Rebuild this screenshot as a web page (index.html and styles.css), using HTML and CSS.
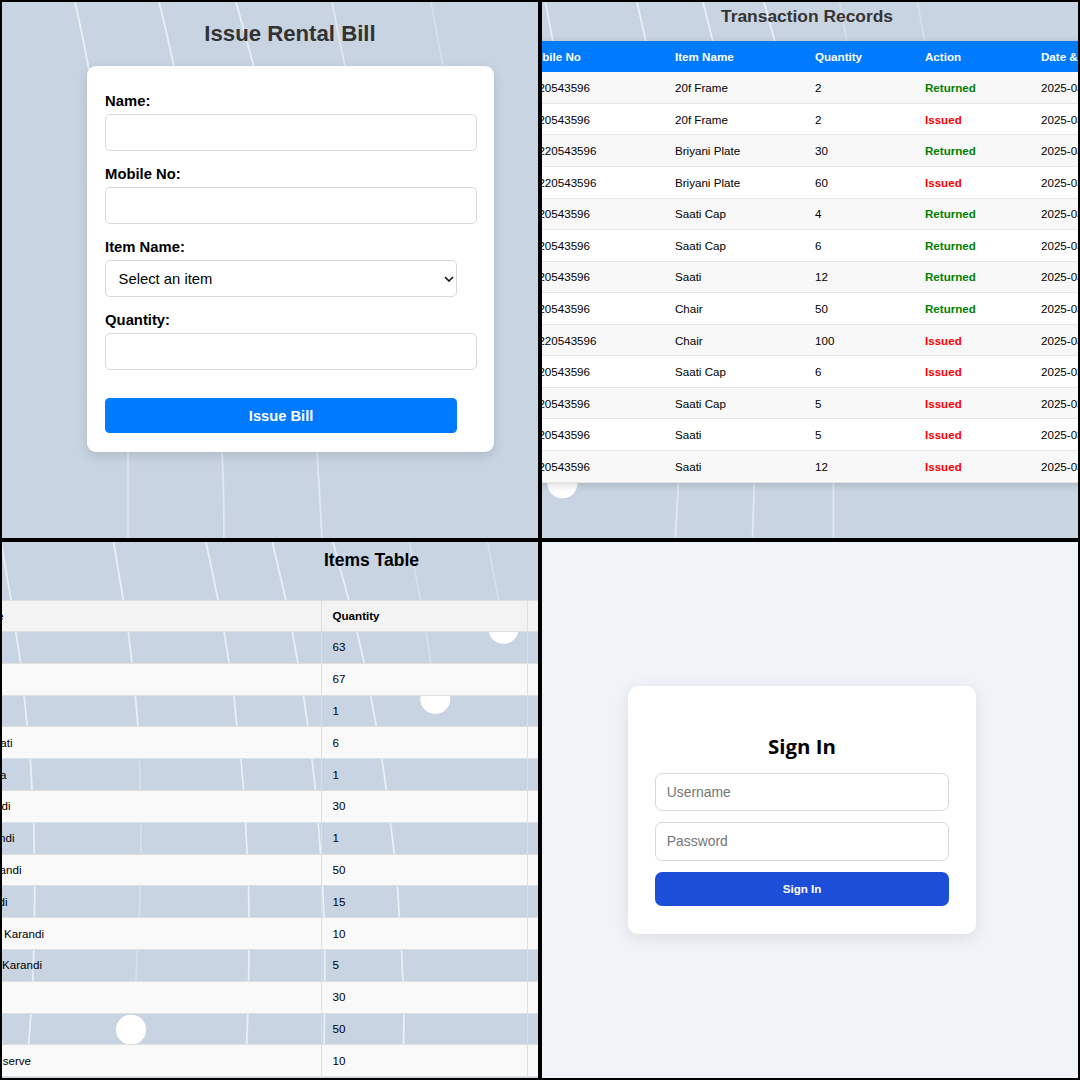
FILE: index.html
```
<!DOCTYPE html>
<html lang="en">
<head>
<meta charset="utf-8">
<title>Rental Manager</title>
<link rel="stylesheet" href="styles.css">
</head>
<body>
<main class="board">
  <section class="panel issue">
    <svg class="backdrop" viewBox="2 2 536 536" aria-hidden="true">
      <path d="M75 2Q82 33 89 70M159 2Q167 33 174 67M236 2L254 67"/>
      <path class="soft" d="M332 2L345 67M128 450V538M222 450Q224 490 224 538M317 450L322 538"/>
      <path class="faint" d="M431 2L443 67"/>
    </svg>
    <h1 class="title">Issue Rental Bill</h1>
    <form class="bill-card">
      <label class="label" for="name">Name:</label>
      <input class="field" id="name" type="text">
      <label class="label" for="mobile">Mobile No:</label>
      <input class="field" id="mobile" type="text">
      <label class="label" for="item">Item Name:</label>
      <div class="select" id="item"><span>Select an item</span>
        <svg class="chevron" viewBox="0 0 10 6"><path d="M1 1L5 5L9 1"/></svg>
      </div>
      <label class="label" for="quantity">Quantity:</label>
      <input class="field" id="quantity" type="text">
      <button class="bill-button" type="button">Issue Bill</button>
    </form>
  </section>

  <section class="panel records">
    <svg class="backdrop" viewBox="542 2 536 536" aria-hidden="true">
      <path d="M545.5 2L553 42M637 2L646 42M703 2L713 42M764 2L775 42"/>
      <path class="soft" d="M678.5 482L675.3 538M754.3 482L752.5 538M833.4 482V538"/>
      <path class="faint" d="M839.5 2L847 42M917.5 2L924.8 42"/>
      <circle cx="562.4" cy="483.3" r="15"/>
    </svg>
    <h2 class="title">Transaction Records</h2>
    <table class="record-table">
      <colgroup><col class="c-mobile"><col class="c-item"><col class="c-qty"><col class="c-action"><col class="c-date"></colgroup>
      <thead><tr><th>Mobile No</th><th>Item Name</th><th>Quantity</th><th>Action</th><th>Date &amp; Time</th></tr></thead>
      <tbody>
        <tr><td>9220543596</td><td>20f Frame</td><td>2</td><td class="returned">Returned</td><td>2025-03-01</td></tr>
        <tr><td>9220543596</td><td>20f Frame</td><td>2</td><td class="issued">Issued</td><td>2025-03-01</td></tr>
        <tr><td>99220543596</td><td>Briyani Plate</td><td>30</td><td class="returned">Returned</td><td>2025-03-01</td></tr>
        <tr><td>99220543596</td><td>Briyani Plate</td><td>60</td><td class="issued">Issued</td><td>2025-03-01</td></tr>
        <tr><td>9220543596</td><td>Saati Cap</td><td>4</td><td class="returned">Returned</td><td>2025-03-01</td></tr>
        <tr><td>9220543596</td><td>Saati Cap</td><td>6</td><td class="returned">Returned</td><td>2025-03-01</td></tr>
        <tr><td>9220543596</td><td>Saati</td><td>12</td><td class="returned">Returned</td><td>2025-03-01</td></tr>
        <tr><td>9220543596</td><td>Chair</td><td>50</td><td class="returned">Returned</td><td>2025-03-01</td></tr>
        <tr><td>99220543596</td><td>Chair</td><td>100</td><td class="issued">Issued</td><td>2025-03-01</td></tr>
        <tr><td>9220543596</td><td>Saati Cap</td><td>6</td><td class="issued">Issued</td><td>2025-03-01</td></tr>
        <tr><td>9220543596</td><td>Saati Cap</td><td>5</td><td class="issued">Issued</td><td>2025-03-01</td></tr>
        <tr><td>9220543596</td><td>Saati</td><td>5</td><td class="issued">Issued</td><td>2025-03-01</td></tr>
        <tr><td>9220543596</td><td>Saati</td><td>12</td><td class="issued">Issued</td><td>2025-03-01</td></tr>
      </tbody>
    </table>
  </section>

  <section class="panel items">
    <svg class="backdrop" viewBox="2 542 536 536" aria-hidden="true">
      <path d="M1 542L11 600L15.8 632L20.7 663L24.1 695L27.2 727L30.3 759L32 790L33.7 823L34.4 854L34.8 886L34.4 918L33.7 950L32.7 981L31 1013L28.6 1045"/>
      <path d="M113.6 542L123.3 600L128.4 632L131.9 663L135.3 695L138 727"/>
      <path class="faint" d="M138 727L139.5 759L140.2 790L141.2 823L140.8 854L140.1 886L139.5 918L137.4 950L136 981"/>
      <path d="M206 542L218 600L224.2 632L229 663L233.8 695L236.9 727L241 759L243.5 790L245.5 823L247.2 854L248.6 886L249 918V950L248.6 981L247.9 1013L246.6 1045"/>
      <path d="M272.4 542L285.8 600L292.4 632L297.9 663L303.4 695L307.9 727L312 759L315.4 790L318.2 823L320.6 854L322.7 886L324 918L324.7 950V1013L324 1045"/>
      <path d="M333 542L348.8 600L357 632L364.3 663L370.5 695L376.4 727L381.9 759L386.4 790L390.5 823L394.3 854L397.4 886L399.4 918L401.5 950L402.9 981L403.9 1013L403.6 1045"/>
      <path class="faint" d="M409.4 542L420.5 600L426.3 632L430.8 663M487.6 542L498.6 600"/>
      <circle cx="503.5" cy="629" r="15"/><circle cx="435.3" cy="699" r="15"/><circle cx="131" cy="1029.7" r="15"/>
    </svg>
    <h2 class="title">Items Table</h2>
    <table class="item-table">
      <colgroup><col class="c-name"><col class="c-count"><col class="c-edge"></colgroup>
      <thead><tr><th><span class="tail t0">Item Name</span></th><th>Quantity</th><th></th></tr></thead>
      <tbody>
        <tr><td></td><td>63</td><td></td></tr>
        <tr><td></td><td>67</td><td></td></tr>
        <tr><td></td><td>1</td><td></td></tr>
        <tr><td><span class="tail t1">Saati</span></td><td>6</td><td></td></tr>
        <tr><td><span class="tail t2">Kadaya</span></td><td>1</td><td></td></tr>
        <tr><td><span class="tail t3">Karandi</span></td><td>30</td><td></td></tr>
        <tr><td><span class="tail t4">Karandi</span></td><td>1</td><td></td></tr>
        <tr><td><span class="tail t5">Karandi</span></td><td>50</td><td></td></tr>
        <tr><td><span class="tail t6">Karandi</span></td><td>15</td><td></td></tr>
        <tr><td><span class="tail t7">Karandi</span></td><td>10</td><td></td></tr>
        <tr><td><span class="tail t8">Karandi</span></td><td>5</td><td></td></tr>
        <tr><td></td><td>30</td><td></td></tr>
        <tr><td></td><td>50</td><td></td></tr>
        <tr><td><span class="tail t9">serve</span></td><td>10</td><td></td></tr>
        <tr><td></td><td></td><td></td></tr>
      </tbody>
    </table>
  </section>

  <section class="panel login">
    <form class="login-card">
      <h2 class="login-title">Sign In</h2>
      <input class="login-field" type="text" placeholder="Username">
      <input class="login-field" type="password" placeholder="Password">
      <button class="login-button" type="button">Sign In</button>
    </form>
  </section>
</main>
</body>
</html>
```
FILE: styles.css
```
* { box-sizing: border-box; }
body {
  margin: 0;
  background: #000;
  color: #000;
  font-family: "Liberation Sans", Arial, sans-serif;
}
.board {
  display: grid;
  grid-template: 536px 536px / 536px 536px;
  gap: 4px;
  width: 1080px;
  height: 1080px;
  padding: 2px;
}
.panel {
  position: relative;
  overflow: hidden;
  background: #c8d4e2;
}
.backdrop {
  position: absolute;
  inset: 0;
  width: 536px;
  height: 536px;
  fill: none;
  stroke: #fff;
  stroke-opacity: .62;
  stroke-width: 1.8;
}
.backdrop .soft { stroke-opacity: .45; }
.backdrop .faint { stroke-opacity: .27; }
.backdrop circle { fill: #fff; stroke: none; }
.title {
  position: relative;
  margin: 0;
  text-align: center;
  white-space: nowrap;
}

/* Issue bill form */
.issue .title {
  width: 407px;
  margin-left: 84.5px;
  padding-top: 18px;
  height: 63.5px;
  font-size: 22.2px;
  line-height: 27px;
  color: #333;
}
.bill-card {
  position: relative;
  display: flex;
  flex-direction: column;
  width: 407px;
  height: 386px;
  margin-left: 84.7px;
  padding: 25.5px 18px 18px 18.4px;
  border-radius: 9px;
  background: #fff;
  box-shadow: 0 4px 12px rgba(0, 0, 0, .12);
}
.label {
  height: 23.4px;
  font-size: 14.8px;
  font-weight: 700;
  line-height: 21px;
}
.field,
.select {
  width: 371.5px;
  height: 37px;
  margin: 0 0 12.6px;
  border: 1px solid #d9d9d9;
  border-radius: 5px;
  background: #fff;
}
.select {
  display: flex;
  align-items: center;
  justify-content: space-between;
  width: 352px;
  padding: 0 2.5px 0 12.5px;
  font-size: 14.8px;
}
.chevron {
  width: 10px;
  height: 6px;
  fill: none;
  stroke: #111;
  stroke-width: 1.6;
}
.bill-button {
  width: 352px;
  height: 35.5px;
  margin-top: 15px;
  padding: 0;
  border: 0;
  border-radius: 4.5px;
  background: #007bff;
  color: #fff;
  font: 700 14.7px "Liberation Sans", Arial, sans-serif;
}

/* Tables */
table {
  position: relative;
  border-collapse: separate;
  border-spacing: 0;
  table-layout: fixed;
  font-size: 11.6px;
}
th, td {
  padding: 0;
  text-align: left;
  white-space: nowrap;
  line-height: 14px;
}
.records .title {
  height: 39px;
  padding: 4px 6px 0 0;
  font-size: 17.4px;
  line-height: 21px;
  color: #333;
}
.record-table {
  width: 675px;
  margin-left: -16.5px;
  box-shadow: 0 2px 8px rgba(0, 0, 0, .16);
}
.c-mobile { width: 149.5px; }
.c-item { width: 140px; }
.c-qty { width: 110px; }
.c-action { width: 116px; }
.record-table th {
  height: 31.4px;
  background: #007bff;
  color: #fff;
}
.record-table td {
  height: 31.55px;
  padding-top: 1px;
  border-bottom: 1px solid #e6e6e6;
  background: #fff;
}
.record-table tr:nth-child(odd) td { background: #f8f8f8; }
.record-table td.returned { color: #008000; font-weight: 700; }
.record-table td.issued { color: #f00; font-weight: 700; }

.items .title {
  width: 333px;
  height: 58px;
  margin-left: 203px;
  padding: 8px 0 0;
  font-size: 17.5px;
  line-height: 21px;
}
.item-table { width: 570px; margin-left: -21px; }
.c-name { width: 340px; }
.c-count { width: 206px; }
.item-table th,
.item-table td {
  height: 31.8px;
  padding-left: 10.5px;
  border: solid #dfdfdf;
  border-width: 0 0 1px 1px;
}
.item-table th { height: 32px; border-top-width: 1px; background: #f3f3f3; }
.item-table tr:nth-child(even) td { background: #f9f9f9; }
.item-table tr > :first-child { padding-left: 0; }
/* Names end at the widths below, running past the panel's left edge */
.tail { display: flex; justify-content: flex-end; }
.t0 { width: 21.5px; }
.t1 { width: 30.5px; }
.t2 { width: 24.5px; }
.t3 { width: 28.5px; }
.t4 { width: 32.5px; }
.t5 { width: 39.5px; }
.t6 { width: 25.5px; }
.t7 { width: 62px; }
.t8 { width: 60px; }
.t9 { width: 49px; }

/* Login */
.login {
  display: flex;
  justify-content: center;
  background: #f0f4f9;
}
.login-card {
  display: flex;
  flex-direction: column;
  width: 348.5px;
  height: 248.5px;
  margin: 143.8px 16px 0 0;
  padding: 43px 27.5px 0;
  border-radius: 10px;
  background: #fff;
  box-shadow: 0 4px 18px rgba(0, 0, 0, .09);
}
.login-title {
  height: 44px;
  margin: 0;
  font: 700 20.4px/34px "Open Sans", "Noto Sans", sans-serif;
  text-align: center;
}
.login-field {
  width: 100%;
  height: 38.5px;
  margin: 0 0 11px;
  padding: 0 10.5px 1px;
  border: 1px solid #d9d9d9;
  border-radius: 7px;
  font: 13.9px "Liberation Sans", Arial, sans-serif;
}
.login-field::placeholder { color: #757575; }
.login-button {
  height: 34.5px;
  padding: 0 0 1px;
  border: 0;
  border-radius: 7px;
  background: #1d4ed8;
  color: #fff;
  font: 700 11.6px "Liberation Sans", Arial, sans-serif;
}
```
